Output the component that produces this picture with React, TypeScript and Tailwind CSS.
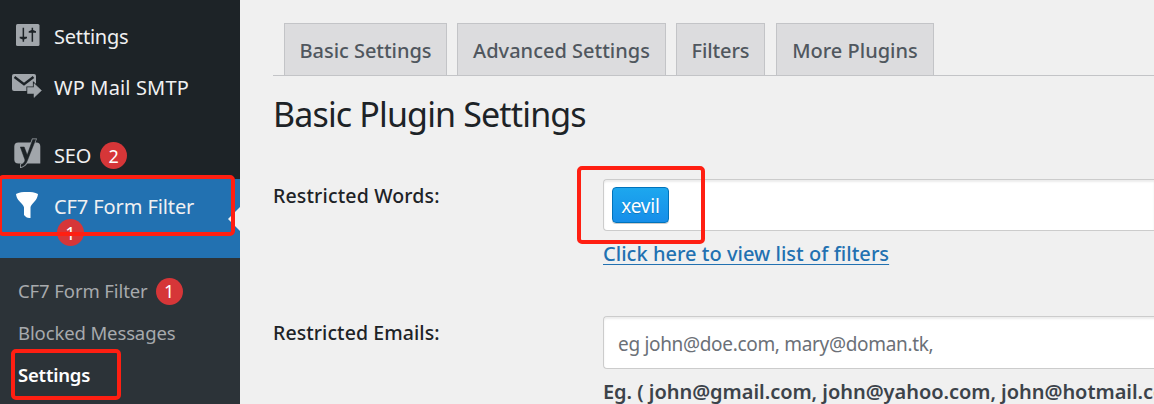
import type { ReactNode } from "react";

function Badge({ children }: { children: ReactNode }) {
  return (
    <span className="flex size-[27px] shrink-0 items-center justify-center rounded-full bg-[#d63638] text-[18px] leading-none text-white">
      {children}
    </span>
  );
}

function SettingsIcon() {
  return (
    <svg width="24" height="22" viewBox="0 0 24 22" className="block">
      <rect width="23.500" height="22" rx="1.500" fill="#a1a6ab" />
      <g fill="#1d2327">
        <path d="M6.600 3.700h1.500v9H11v1.500l-2.900 1.300v2.200H6.600v-2.200l-2.900-1.300v-1.500h2.900z" />
        <path d="M15.600 3.700h1.500v2.300L20 7.300v1.500h-2.900v8.900h-1.500V8.800h-2.900V7.300L15.600 6z" />
      </g>
    </svg>
  );
}

function MailIcon() {
  return (
    <svg width="30" height="24" viewBox="0 0 30 24" className="block">
      <rect width="24" height="17" rx="2" fill="#a1a6ab" />
      <path d="M2.500 3 12 10.300 21.500 3" fill="none" stroke="#1d2327" strokeWidth="2.400" />
      <path d="M15.500 13.500H22V9.500l7.500 7-7.500 7v-4h-6.500z" fill="#1d2327" stroke="#1d2327" strokeWidth="2.200" />
      <path d="M15.500 13.500H22V9.500l7.500 7-7.500 7v-4h-6.500z" fill="#a1a6ab" stroke="#a1a6ab" strokeWidth=".5" />
    </svg>
  );
}

function YoastIcon() {
  return (
    <svg width="27" height="31" viewBox="0 0 27 31" className="block">
      <path d="M4.300 4.500h18a4 4 0 0 1 4 4V25.500h-22a4 4 0 0 1-4-4v-13a4 4 0 0 1 4-4z" fill="#a1a6ab" />
      <path d="M18 .5h5L14.700 22.300c-1.800 4.800-4.300 7.300-8.700 7.600v-4.200c2.600-.4 3.700-1.900 4.100-3.600z" fill="#a1a6ab" />
      <path d="M18.700 1.500h3L13.600 22c-1.600 4.200-3.400 6.300-6.600 6.700v-2.300c2.500-.5 3.700-2.200 4-4.400L6.300 9h3.900l3 8z" fill="#1d2327" stroke="#1d2327" strokeWidth=".5" />
    </svg>
  );
}

function FunnelIcon() {
  return (
    <svg width="22" height="27" viewBox="0 0 22 27" className="block">
      <path d="M0 2C3 .3 7 0 11 0s8 .3 11 2c-.3 2-.8 4-2.200 6-1.500 2.200-5.300 5.500-5.300 7.500V26c-3.500.3-4.500-.8-6.500-3v-7.500c0-2-4-5.300-5.700-7.500C.8 6 .3 4 0 2z" fill="#fff" />
    </svg>
  );
}

function MenuItem({ icon, label, badge, className }: { icon: ReactNode; label: ReactNode; badge?: string; className: string }) {
  return (
    <a className={"flex items-center text-[20px] text-[#f0f0f1] " + className}>
      <span className="flex w-[54px] shrink-0">{icon}</span>
      {label}
      {badge && <span className="ml-[9px]"><Badge>{badge}</Badge></span>}
    </a>
  );
}

function Sidebar() {
  return (
    <nav className="flex w-[240px] shrink-0 flex-col bg-[#1d2327]">
      <MenuItem className="mt-[11px] h-[51px]" icon={<span className="ml-4 -mt-1"><SettingsIcon /></span>} label={<span className="tracking-[-0.2px]">Settings</span>} />
      <MenuItem className="h-[51px]" icon={<span className="ml-3 -mt-[3px]"><MailIcon /></span>} label={<span className="tracking-[0.15px]">WP Mail SMTP</span>} />
      <MenuItem className="mt-[18px] h-[49px] -mb-px" icon={<span className="ml-[14px] -mt-[4px]"><YoastIcon /></span>} label={<span className="tracking-[-0.2px]">SEO</span>} badge="2" />
      <div className="relative flex h-[79px] flex-col bg-[#2271b1]">
        <MenuItem className="h-[41px] mt-[7px]" icon={<span className="ml-4 -mt-[2px]"><FunnelIcon /></span>} label={<span className="tracking-[-0.1px]">CF7 Form Filter</span>} />
        <span className="-mt-[8px] ml-[57px]"><Badge>1</Badge></span>
        <svg width="12" height="24" viewBox="0 0 12 24" className="absolute right-0 top-[28px]">
          <path d="M12 0v24L0 12z" fill="#f0f0f1" />
        </svg>
        <div className="absolute -left-[2px] -top-[4px] h-[61px] w-[237px] rounded-[5px] border-4 border-[#ff1f12]" />
      </div>
      <div className="flex flex-1 flex-col bg-[#2c3338] pt-[12px] text-[18.500px] text-[#a7aaad]">
        <a className="flex h-[42px] items-center gap-[8px] pl-[18px]"><span className="tracking-[-0.1px]">CF7 Form Filter</span><Badge>1</Badge></a>
        <a className="flex h-[42px] items-center pl-[18px]"><span className="tracking-[-0.12px]">Blocked Messages</span></a>
        <a className="relative flex h-[42px] items-center pl-[18px] font-semibold text-white">
          <span className="tracking-[-0.2px]">Settings</span>
          <span className="absolute left-[10.500px] top-[-5px] h-[51px] w-[110px] rounded-[5px] border-4 border-[#ff1f12]" />
        </a>
      </div>
    </nav>
  );
}

function Tab({ children, className }: { children: ReactNode; className: string }) {
  return (
    <a className={"flex h-[52px] items-center justify-center border border-b-0 border-[#c3c4c7] bg-[#dcdcde] text-[20px] font-medium text-[#50575e] pt-[3px] " + className}>
      {children}
    </a>
  );
}

export default function App() {
  return (
    <div className="flex h-[404px] w-[1154px] overflow-hidden bg-[#f0f0f0] font-['Noto_Sans',sans-serif] whitespace-nowrap">
      <Sidebar />
      <main className="flex min-w-0 flex-1 flex-col pl-[33px]">
        <div className="flex shrink-0 border-b border-[#c3c4c7] pl-[11px] pt-[23px]">
          <Tab className="w-[163px] tracking-[-0.050px]">Basic Settings</Tab>
          <Tab className="ml-[10px] w-[209px]">Advanced Settings</Tab>
          <Tab className="ml-[10px] w-[89px] tracking-[-0.1px]">Filters</Tab>
          <Tab className="ml-[11px] w-[158px]">More Plugins</Tab>
        </div>
        <h1 className="mt-[18px] h-[40px] shrink-0 text-[34px] leading-[40px] text-[#1d2327] tracking-[-0.850px]">Basic Plugin Settings</h1>
        <div className="mt-[45px] flex h-[137px] shrink-0">
          <div className="w-[330px] shrink-0 pt-[4px] text-[19.500px] leading-[26px] font-medium text-[#1d2327] tracking-[0.160px]">Restricted Words:</div>
          <div className="flex flex-1 flex-col">
            <div className="relative flex h-[52px] shrink-0 items-center rounded-l-[4px] border border-r-0 border-[#cccccc] bg-white pl-2 shadow-[inset_0_2px_2px_rgba(0,0,0,0.075)]">
              <span className="flex h-[36px] w-[57px] items-center justify-center rounded-[4px] border border-[#0073bb] bg-linear-to-b from-[#1da7ee] to-[#178ee9] pt-[2px] text-[19px] text-white tracking-[-0.2px] shadow-[0_1px_0_rgba(0,0,0,0.2)] [text-shadow:0_1px_0_rgba(0,51,83,0.3)]">xevil</span>
              <span className="absolute left-[-27px] top-[-14px] h-[78px] w-[128px] rounded-[5px] border-4 border-[#ff1f12]" />
            </div>
            <a className="mt-[10px] self-start text-[20px] leading-[26px] font-medium text-[#2271b1] underline decoration-1 underline-offset-[3px] tracking-[0.030px]">Click here to view list of filters</a>
          </div>
        </div>
        <div className="flex shrink-0">
          <div className="w-[330px] shrink-0 pt-[4px] text-[19.500px] leading-[26px] font-medium text-[#1d2327] tracking-[0.080px]">Restricted Emails:</div>
          <div className="flex flex-1 flex-col">
            <div className="flex h-[53px] items-center rounded-l-[4px] border border-r-0 border-[#cccccc] bg-white pl-[14px] pt-[3px] text-[19px] text-[#6b7077] tracking-[-0.320px] shadow-[inset_0_2px_2px_rgba(0,0,0,0.075)]">eg john@doe.com, mary@doman.tk,</div>
            <p className="mt-[10px] text-[20px] leading-[26px] font-semibold text-[#3c434a] tracking-[-0.040px]">Eg. ( john@gmail.com, john@yahoo.com, john@hotmail.com</p>
          </div>
        </div>
      </main>
    </div>
  );
}
